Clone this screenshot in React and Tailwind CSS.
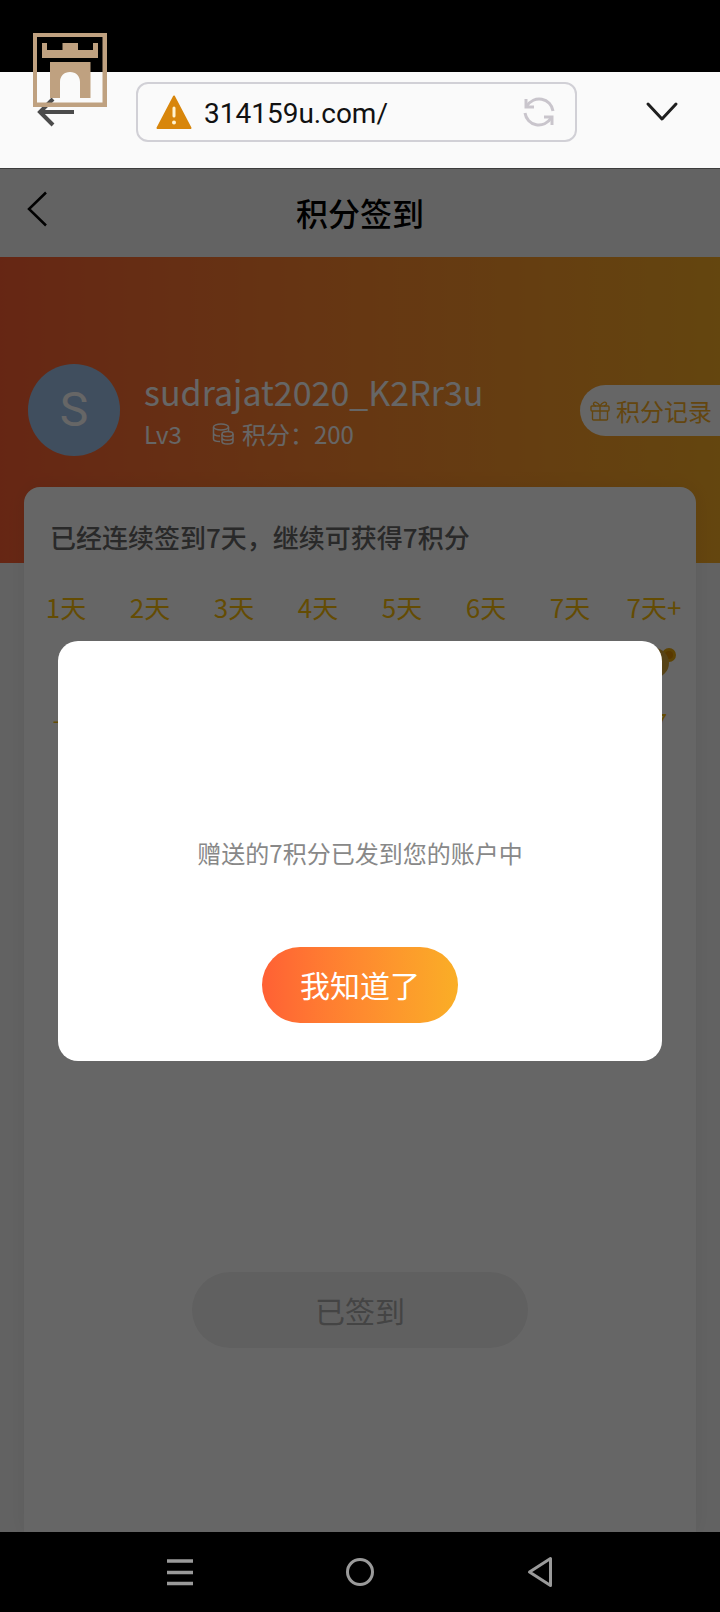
const DAYS = [
  { label: '1天', points: '+1' },
  { label: '2天', points: '+2' },
  { label: '3天', points: '+3' },
  { label: '4天', points: '+4' },
  { label: '5天', points: '+5' },
  { label: '6天', points: '+6' },
  { label: '7天', points: '+7' },
  { label: '7天+', points: '+7', bear: true },
];

// Floating castle gate badge
function CastleLogo() {
  return (
    <svg className="absolute left-[33px] top-[33px] z-20" width="74" height="74" viewBox="0 0 74 74" fill="#bfa180" aria-hidden="true">
      <path fillRule="evenodd" d="M0 0H74V74H0ZM4 4V69.500H69.500V4Z" />
      <path d="M9 10H14V17H29.500V10H45V17H60V10H65V25H9Z" />
      <path d="M17 29H57.500V65H47V49C47 43 43 39 37 39S27 43 27 49V65H17Z" />
    </svg>
  );
}

function WarningIcon() {
  return (
    <svg width="36" height="36" viewBox="0 0 36 36" aria-hidden="true">
      <path d="M18 2.500L34.500 34H1.500Z" fill="#d8860b" stroke="#d8860b" strokeWidth="2" strokeLinejoin="round" />
      <path d="M18 14V22" stroke="#fff3d0" strokeWidth="3" strokeLinecap="round" />
      <circle cx="18" cy="28.500" r="2" fill="#fff3d0" />
    </svg>
  );
}

function ReloadIcon() {
  return (
    <svg width="32" height="32" viewBox="0 0 32 32" fill="none" stroke="#c9c5cc" strokeWidth="3" aria-hidden="true">
      <path d="M30 15A14 14 0 0 0 4 10" />
      <path d="M3 3V11H11" />
      <path d="M2 17A14 14 0 0 0 28 22" />
      <path d="M29 29V21H21" />
    </svg>
  );
}

function CoinsIcon() {
  return (
    <svg width="22" height="22" viewBox="0 0 22 22" fill="none" stroke="currentColor" strokeWidth="1.500" aria-hidden="true">
      <ellipse cx="9" cy="4" rx="7.500" ry="3" />
      <path d="M1.500 4V16C1.500 17.500 4 18.500 8 18.600M1.500 10C1.500 11.500 4 13 8 13M16.500 4V8" />
      <ellipse cx="15.500" cy="11" rx="5.500" ry="2.500" />
      <path d="M10 11V18.500C10 20 12.500 21 15.500 21S21 20 21 18.500V11M10 14.700C10 16.200 12.500 17.200 15.500 17.200S21 16.200 21 14.700" />
    </svg>
  );
}

function GiftIcon() {
  return (
    <svg width="20" height="20" viewBox="0 0 20 20" fill="none" stroke="currentColor" strokeWidth="1.400" aria-hidden="true">
      <rect x="1" y="5" width="18" height="5" rx="1" />
      <path d="M2.500 10V18C2.500 18.600 3 19 3.500 19H16.500C17 19 17.500 18.600 17.500 18V10M10 5V19" />
      <path d="M10 5C8 1 4 0 3.500 2.500C3.300 4 5 5 6 5M10 5C12 1 16 0 16.500 2.500C16.700 4 15 5 14 5" />
    </svg>
  );
}

function BearCoin() {
  return (
    <svg width="44" height="44" viewBox="0 0 44 44" aria-hidden="true">
      <circle cx="7" cy="12" r="7" fill="#e8a70c" />
      <circle cx="37" cy="12" r="7" fill="#e8a70c" />
      <circle cx="7" cy="12" r="4" fill="#dc8c00" />
      <circle cx="37" cy="12" r="4" fill="#dc8c00" />
      <circle cx="22" cy="20" r="15" fill="#d9a93a" />
    </svg>
  );
}

function BrowserBar() {
  return (
    <header className="flex h-[97px] items-start border-b border-[#3c3c3c] bg-[#fafafa] pl-9 pr-10 pt-[10px]">
      <button type="button" aria-label="返回" className="flex h-[60px] w-10 items-center">
        <svg width="40" height="30" viewBox="0 0 40 30" fill="none" stroke="#4b4b4b" strokeWidth="4" aria-hidden="true">
          <path d="M38 15H5M17 2L4 15L17 28" />
        </svg>
      </button>
      <div className="ml-[60px] flex h-[60px] min-w-0 flex-1 items-center rounded-xl border-2 border-[#d1d0d6] pl-[18px] pr-5">
        <WarningIcon />
        <input
          type="text"
          aria-label="网址"
          defaultValue="314159u.com/"
          className="ml-3 min-w-0 flex-1 bg-transparent pt-1 font-[Roboto,sans-serif] text-[28px] leading-9 text-[#111111] outline-none"
        />
        <button type="button" aria-label="刷新">
          <ReloadIcon />
        </button>
      </div>
      <button type="button" aria-label="展开" className="ml-[67px] flex h-[60px] w-9 items-center justify-center">
        <svg width="36" height="22" viewBox="0 0 36 22" fill="none" stroke="#1f1f1f" strokeWidth="3" strokeLinecap="round" strokeLinejoin="round" aria-hidden="true">
          <path d="M4 3L18 18L32 3" />
        </svg>
      </button>
    </header>
  );
}

function PageHeader() {
  return (
    <div className="grid h-[88px] grid-cols-[80px_1fr_80px] items-center bg-[#f8f8f8]">
      <button type="button" aria-label="返回上一页" className="pb-2 pl-[26px]">
        <svg width="24" height="38" viewBox="0 0 24 38" fill="none" stroke="#000000" strokeWidth="2.500" aria-hidden="true">
          <path d="M20 2.500L3 19L20 35.500" />
        </svg>
      </button>
      <h1 className="pb-0.5 text-center text-[32px] font-medium leading-10 text-black">积分签到</h1>
    </div>
  );
}

function Profile() {
  return (
    <section className="h-[306px] bg-linear-to-r from-[#ff6034] to-[#faae26] pt-[107px]">
      <div className="flex items-center pl-7">
        <div className="flex size-[92px] items-center justify-center rounded-full bg-[#a0c3eb] font-[Roboto,sans-serif] text-5xl text-white">
          S
        </div>
        <div className="ml-6 flex-1 pt-1 text-white">
          <p className="text-[34px] leading-[44px]">sudrajat2020_K2Rr3u</p>
          <p className="flex items-center text-2xl leading-10">
            <span>Lv3</span>
            <span className="ml-[30px] flex items-center gap-2">
              <CoinsIcon />
              积分：200
            </span>
          </p>
        </div>
        <a href="#records" className="flex h-[51px] items-center gap-1.5 rounded-l-full bg-white pl-2.5 pr-2 pt-0.5 text-2xl text-[#faae26]">
          <GiftIcon />
          积分记录
        </a>
      </div>
    </section>
  );
}

function CheckInCard() {
  return (
    <section className="relative mx-6 -mt-[76px] flex-1 rounded-t-2xl bg-white shadow-[0_0_20px_rgba(0,0,0,0.06)]">
      <h2 className="px-[26px] pt-[30px] text-[26px] font-medium leading-10 text-[#666666]">
        已经连续签到7天，继续可获得7积分
      </h2>
      <ul className="mt-[30px] grid grid-cols-8 text-[#fbbd08]">
        {DAYS.map((day) => (
          <li key={day.label} className="flex flex-col items-center">
            <span className="text-[26px] leading-10">{day.label}</span>
            <span className="mt-4 h-11">{day.bear && <BearCoin />}</span>
            <span className="mt-4 text-2xl leading-9">{day.points}</span>
          </li>
        ))}
      </ul>
      <button
        type="button"
        disabled
        className="mx-auto mt-[533px] block h-[76px] w-1/2 rounded-full bg-[#f0f0f0] text-[30px] text-[#aaaaaa]"
      >
        已签到
      </button>
    </section>
  );
}

function RewardDialog() {
  return (
    <div className="absolute inset-0 z-10 flex items-center justify-center bg-black/60">
      <div role="dialog" aria-modal="true" className="flex w-[84%] flex-col items-center rounded-[20px] bg-white pb-[38px] pt-[194px]">
        <p className="text-2xl leading-9 text-[#888888]">赠送的7积分已发到您的账户中</p>
        <button
          type="button"
          className="mt-[76px] h-[76px] w-[196px] rounded-full bg-linear-to-r from-[#ff6034] to-[#faae26] text-[30px] text-white"
        >
          我知道了
        </button>
      </div>
    </div>
  );
}

function SystemNav() {
  return (
    <nav className="flex h-20 items-center justify-center gap-[140px] bg-black text-[#9a9a9a]">
      <button type="button" aria-label="最近任务" className="size-10">
        <svg width="40" height="40" viewBox="0 0 40 40" stroke="currentColor" strokeWidth="3.500" aria-hidden="true">
          <path d="M7 9H33M7 20.500H33M7 31.500H33" />
        </svg>
      </button>
      <button type="button" aria-label="主屏幕" className="size-10">
        <svg width="40" height="40" viewBox="0 0 40 40" fill="none" stroke="currentColor" strokeWidth="3" aria-hidden="true">
          <circle cx="20" cy="20" r="12.500" />
        </svg>
      </button>
      <button type="button" aria-label="后退" className="size-10">
        <svg width="40" height="40" viewBox="0 0 40 40" fill="none" stroke="currentColor" strokeWidth="3" strokeLinejoin="round" aria-hidden="true">
          <path d="M9.500 20L30.500 6.500V33.500Z" />
        </svg>
      </button>
    </nav>
  );
}

export default function App() {
  return (
    <div className="relative flex min-h-screen flex-col font-['Noto_Sans_CJK_SC',sans-serif]">
      <div className="h-18 bg-black" />
      <CastleLogo />
      <BrowserBar />
      <main className="relative flex flex-1 flex-col overflow-hidden bg-[#f5f5f5]">
        <PageHeader />
        <Profile />
        <CheckInCard />
        <RewardDialog />
      </main>
      <SystemNav />
    </div>
  );
}
